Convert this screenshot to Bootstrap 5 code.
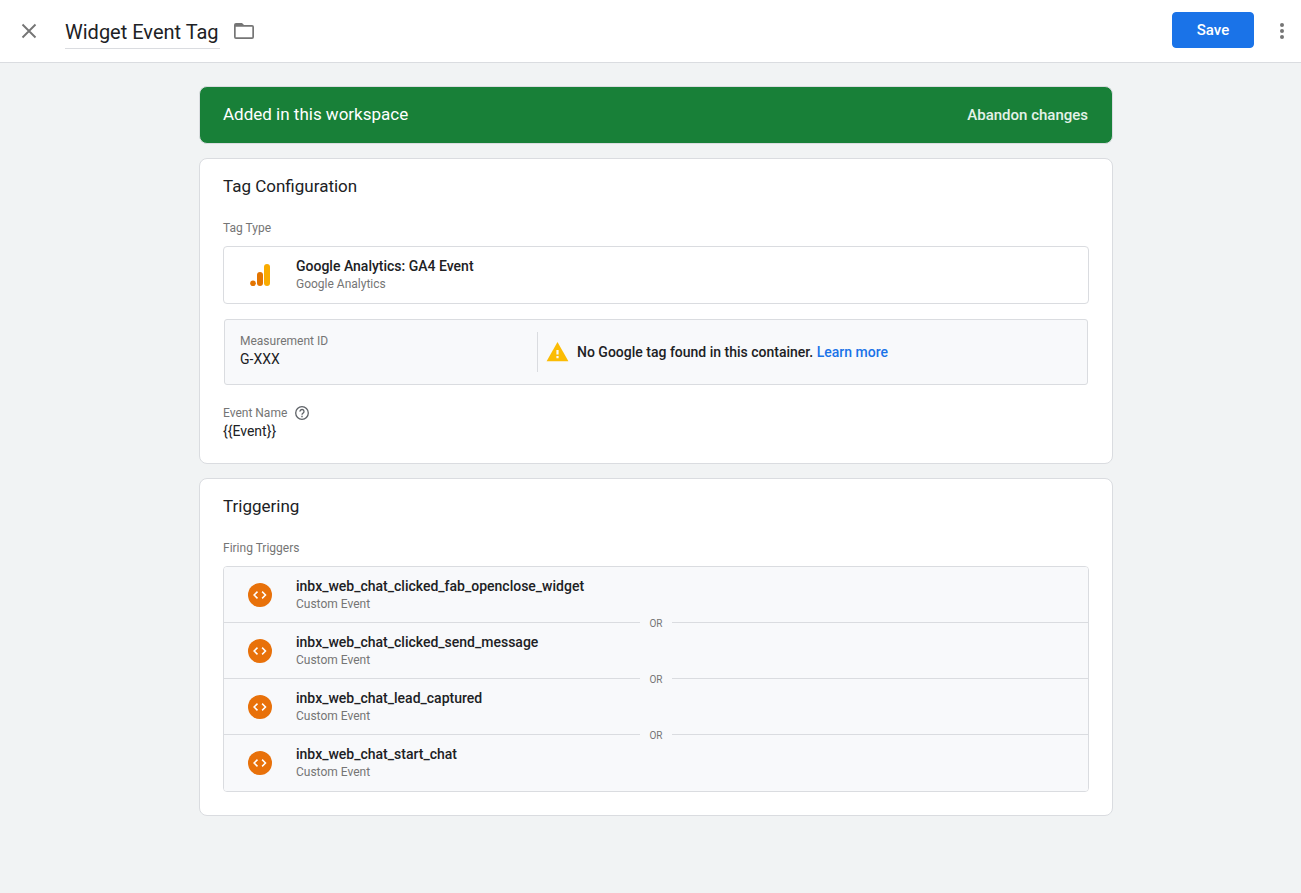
<!DOCTYPE html>
<html lang="en">
<head>
<meta charset="utf-8">
<meta name="viewport" content="width=device-width, initial-scale=1">
<title>Widget Event Tag</title>
<link rel="stylesheet" href="https://cdn.jsdelivr.net/npm/bootstrap@5.3.0/dist/css/bootstrap.min.css">
<style>
  :root { --line: #dadce0; --ink: #202124; --muted: #757575; --tint: #f8f9fb; }
  body { background: #f1f3f4; color: var(--ink); font-family: Roboto, "Liberation Sans", sans-serif; font-size: 14px; line-height: 20px; }
  svg { display: block; flex: none; }
  .app-bar { height: 63px; padding: 0 7px 0 21px; border-bottom: 1px solid var(--line); }
  .icon-btn { border: 0; padding: 0; background: none; color: #757575; }
  .tag-name { width: 155px; height: 36px; margin-left: 28px; padding: 2px 0 0; border: 0; border-bottom: 1px solid var(--line); border-radius: 0; font-size: 20px; line-height: 32px; color: var(--ink); }
  .folder-btn { margin-left: 14px; }
  .btn-save { --bs-btn-bg: #1a73e8; --bs-btn-border-color: #1a73e8; --bs-btn-border-radius: 4px; width: 82px; height: 36px; margin-bottom: 2px; font-size: 14px; font-weight: 500; }
  .editor { padding: 23px 0 24px 11px; }
  .editor-column { max-width: 914px; gap: 14px; }
  .banner { height: 58px; padding: 0 24px 0 23px; background: #188038; border: 1px solid var(--line); border-radius: 8px; color: #fff; }
  .banner .heading { padding-bottom: 2px; }
  .btn-abandon { border: 0; padding: 0; background: none; color: #e4f2e8; font-weight: 500; font-size: 14px; }
  .btn-save, .btn-abandon { font-family: Roboto, "Liberation Sans", sans-serif; font-size: 15px; }
  .card { --bs-card-border-color: var(--line); --bs-card-border-radius: 8px; color: var(--ink); }
  .card-body { padding: 15px 23px 22px; }
  .card-body:has(.triggers) { padding-bottom: 23px; }
  .heading { margin: 0; font-size: 17px; line-height: 24px; font-weight: 400; }
  .caption { font-size: 12px; line-height: 16px; color: var(--muted); }
  .group-label { margin: 22px 0 10px; }
  .entry { height: 56px; padding: 0 24px; gap: 24px; }
  .entry-title { font-weight: 500; line-height: 20px; }
  .entry-text { padding-bottom: 2px; }
  .type-box { border: 1px solid var(--line); border-radius: 4px; }
  .measure-box { margin: 15px 1px 0; height: 66px; background: var(--tint); border: 1px solid var(--line); border-radius: 3px; }
  .measure-id { width: 312px; padding: 0 15px 2px; }
  .measure-note { height: 40px; padding: 0 0 0 8px; border-left: 1px solid var(--line); font-weight: 500; gap: 8px; }
  .measure-note a { color: #1a73e8; text-decoration: none; }
  .event-name { margin-top: 20px; }
  .triggers { border: 1px solid var(--line); border-radius: 4px; overflow: hidden; }
  .triggers .entry { background: var(--tint); }
  .triggers .entry:not(:last-child) { border-bottom: 1px solid var(--line); }
  .or-chip { z-index: 1; width: 32px; padding-top: 3px; background: var(--tint); font-size: 10px; line-height: 12px; color: var(--muted); text-align: center; }
</style>
</head>
<body>
<svg width="0" height="0" class="position-absolute" aria-hidden="true">
  <symbol id="code" viewBox="0 0 24 24"><circle cx="12" cy="12" r="12" fill="#e8710a"/><path d="M9.5 8.6 6.1 12l3.4 3.4M14.1 8.6l3.4 3.4-3.4 3.4" fill="none" stroke="#fff" stroke-width="1.5"/></symbol>
</svg>
<header class="app-bar d-flex align-items-center bg-white">
  <button class="icon-btn" type="button" aria-label="Close"><svg width="16" height="16" viewBox="0 0 16 16"><path d="m1.5 1.5 13 13m0-13-13 13" stroke="currentColor" stroke-width="1.9"/></svg></button>
  <input class="tag-name" type="text" value="Widget Event Tag" aria-label="Tag name">
  <button class="icon-btn folder-btn" type="button" aria-label="Move to folder"><svg width="20" height="16" viewBox="0 0 20 16"><path fill="currentColor" fill-rule="evenodd" d="M2 0h6l2 2h8a2 2 0 0 1 2 2v10a2 2 0 0 1-2 2H2a2 2 0 0 1-2-2V2a2 2 0 0 1 2-2Zm-.3 3.7v10.6h16.6V3.7Z"/></svg></button>
  <button class="btn btn-primary btn-save ms-auto p-0" type="button">Save</button>
  <button class="icon-btn ms-3" type="button" aria-label="More actions"><svg width="24" height="24" viewBox="0 0 24 24" fill="currentColor"><circle cx="12" cy="6" r="2"/><circle cx="12" cy="12" r="2"/><circle cx="12" cy="18" r="2"/></svg></button>
</header>
<main class="editor">
  <div class="editor-column mx-auto d-flex flex-column">
    <div class="banner d-flex align-items-center justify-content-between">
      <p class="heading">Added in this workspace</p>
      <button class="btn-abandon" type="button">Abandon changes</button>
    </div>

    <section class="card">
      <div class="card-body">
        <h2 class="heading">Tag Configuration</h2>
        <div class="caption group-label">Tag Type</div>
        <div class="type-box">
          <div class="entry d-flex align-items-center">
            <svg width="24" height="24" viewBox="0 0 24 24"><rect x="16" y="1" width="6" height="22" rx="3" fill="#f9ab00"/><rect x="9" y="9" width="6" height="14" rx="3" fill="#e37400"/><circle cx="5" cy="20.3" r="2.8" fill="#e37400"/></svg>
            <div class="entry-text"><div class="entry-title">Google Analytics: GA4 Event</div><div class="caption">Google Analytics</div></div>
          </div>
        </div>
        <div class="measure-box d-flex align-items-center">
          <div class="measure-id"><div class="caption">Measurement ID</div><div>G-XXX</div></div>
          <div class="measure-note d-flex align-items-center">
            <svg width="23" height="20" viewBox="0 0 23 20"><path d="M11.5 0 22.4 19.3H.6Z" fill="#fbbc04"/><path d="M10.4 8h2.2v4.5h-2.2Zm0 6h2.2v2.2h-2.2Z" fill="#f8f9fb"/></svg>
            <div>No Google tag found in this container. <a href="#">Learn more</a></div>
          </div>
        </div>
        <div class="event-name">
          <div class="caption d-flex align-items-center gap-2">Event Name
            <button class="icon-btn" type="button" aria-label="Help"><svg width="14" height="14" viewBox="0 0 14 14" fill="none" stroke="#5f6368"><circle cx="7" cy="7" r="6.3" stroke-width="1.3"/><path d="M5 5.6a2 2 0 1 1 3.2 1.5C7.4 7.7 7 8 7 8.8" stroke-width="1.3"/><path d="M7 9.8v1.4" stroke-width="1.4"/></svg></button>
          </div>
          <div>{{Event}}</div>
        </div>
      </div>
    </section>

    <section class="card">
      <div class="card-body">
        <h2 class="heading">Triggering</h2>
        <div class="caption group-label">Firing Triggers</div>
        <div class="triggers">
          <div class="entry d-flex align-items-center position-relative">
            <svg width="24" height="24"><use href="#code"/></svg>
            <div class="entry-text"><div class="entry-title">inbx_web_chat_clicked_fab_openclose_widget</div><div class="caption">Custom Event</div></div>
            <span class="or-chip position-absolute top-100 start-50 translate-middle">OR</span>
          </div>
          <div class="entry d-flex align-items-center position-relative">
            <svg width="24" height="24"><use href="#code"/></svg>
            <div class="entry-text"><div class="entry-title">inbx_web_chat_clicked_send_message</div><div class="caption">Custom Event</div></div>
            <span class="or-chip position-absolute top-100 start-50 translate-middle">OR</span>
          </div>
          <div class="entry d-flex align-items-center position-relative">
            <svg width="24" height="24"><use href="#code"/></svg>
            <div class="entry-text"><div class="entry-title">inbx_web_chat_lead_captured</div><div class="caption">Custom Event</div></div>
            <span class="or-chip position-absolute top-100 start-50 translate-middle">OR</span>
          </div>
          <div class="entry d-flex align-items-center position-relative">
            <svg width="24" height="24"><use href="#code"/></svg>
            <div class="entry-text"><div class="entry-title">inbx_web_chat_start_chat</div><div class="caption">Custom Event</div></div>
          </div>
        </div>
      </div>
    </section>
  </div>
</main>
<script src="https://cdn.jsdelivr.net/npm/bootstrap@5.3.0/dist/js/bootstrap.bundle.min.js"></script>
</body>
</html>
